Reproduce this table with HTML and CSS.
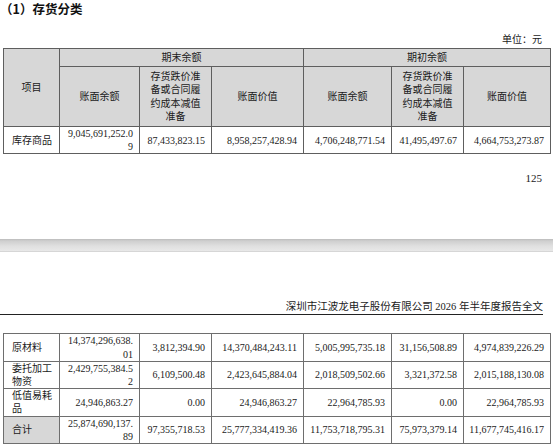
FILE: index.html
```html
<!DOCTYPE html>
<html lang="zh-CN">
<head>
<meta charset="utf-8">
<title>存货分类</title>
<link rel="stylesheet" href="styles.css">
</head>
<body>
<div class="doc">
  <section class="page page-first">
    <h2 class="section-title">（1）存货分类</h2>
    <div class="unit">单位：元</div>
    <table class="inv">
      <colgroup>
        <col class="c1"><col class="c2"><col class="c3"><col class="c4"><col class="c5"><col class="c6"><col class="c7">
      </colgroup>
      <thead>
        <tr class="hr1">
          <th rowspan="2">项目</th>
          <th colspan="3">期末余额</th>
          <th colspan="3">期初余额</th>
        </tr>
        <tr class="hr2">
          <th>账面余额</th>
          <th>存货跌价准备或合同履约成本减值准备</th>
          <th>账面价值</th>
          <th>账面余额</th>
          <th>存货跌价准备或合同履约成本减值准备</th>
          <th>账面价值</th>
        </tr>
      </thead>
      <tbody>
        <tr>
          <td class="name">库存商品</td>
          <td class="num">9,045,691,252.0<br>9</td>
          <td class="num">87,433,823.15</td>
          <td class="num">8,958,257,428.94</td>
          <td class="num">4,706,248,771.54</td>
          <td class="num">41,495,497.67</td>
          <td class="num">4,664,753,273.87</td>
        </tr>
      </tbody>
    </table>
    <div class="page-num">125</div>
  </section>
  <div class="page-gap"></div>
  <section class="page page-second">
    <div class="running-head">深圳市江波龙电子股份有限公司 2026 年半年度报告全文</div>
    <table class="inv inv-cont">
      <colgroup>
        <col class="c1"><col class="c2"><col class="c3"><col class="c4"><col class="c5"><col class="c6"><col class="c7">
      </colgroup>
      <tbody>
        <tr>
          <td class="name">原材料</td>
          <td class="num">14,374,296,638.<br>01</td>
          <td class="num">3,812,394.90</td>
          <td class="num">14,370,484,243.11</td>
          <td class="num">5,005,995,735.18</td>
          <td class="num">31,156,508.89</td>
          <td class="num">4,974,839,226.29</td>
        </tr>
        <tr>
          <td class="name">委托加工物资</td>
          <td class="num">2,429,755,384.5<br>2</td>
          <td class="num">6,109,500.48</td>
          <td class="num">2,423,645,884.04</td>
          <td class="num">2,018,509,502.66</td>
          <td class="num">3,321,372.58</td>
          <td class="num">2,015,188,130.08</td>
        </tr>
        <tr>
          <td class="name">低值易耗品</td>
          <td class="num">24,946,863.27</td>
          <td class="num">0.00</td>
          <td class="num">24,946,863.27</td>
          <td class="num">22,964,785.93</td>
          <td class="num">0.00</td>
          <td class="num">22,964,785.93</td>
        </tr>
        <tr class="total">
          <td class="name">合计</td>
          <td class="num">25,874,690,137.<br>89</td>
          <td class="num">97,355,718.53</td>
          <td class="num">25,777,334,419.36</td>
          <td class="num">11,753,718,795.31</td>
          <td class="num">75,973,379.14</td>
          <td class="num">11,677,745,416.17</td>
        </tr>
      </tbody>
    </table>
  </section>
</div>
</body>
</html>
```
FILE: styles.css
```css
html, body {
  margin: 0;
  padding: 0;
  background: #ffffff;
}

body {
  font-family: "Liberation Serif", "Noto Sans CJK SC", serif;
  color: #1a1a1a;
  font-size: 10px;
}

.doc {
  width: 553px;
}

.page {
  display: flex;
  flex-direction: column;
}

.section-title {
  margin: 0;
  font-family: "Noto Sans CJK SC", sans-serif;
  font-size: 12.5px;
  line-height: 18px;
  font-weight: 700;
  color: #111;
}

.unit {
  margin: 15px 11px 0 0;
  text-align: right;
  line-height: 14px;
  font-size: 10px;
}

.inv {
  margin: 1px 0 0 3px;
  width: 547px;
  table-layout: fixed;
  border-collapse: collapse;
}

.inv .c1 { width: 56px; }
.inv .c2 { width: 80px; }
.inv .c3 { width: 72px; }
.inv .c4 { width: 92px; }
.inv .c5 { width: 88px; }
.inv .c6 { width: 72px; }
.inv .c7 { width: 87px; }

.inv th,
.inv td {
  border: 1px solid #5e5e5e;
  font-size: 10px;
  line-height: 13.2px;
  font-weight: 400;
  vertical-align: middle;
}

.inv th {
  background: #d7d7d7;
  text-align: center;
  padding: 3px 8px;
}

.inv .hr1 th {
  padding: 2px 4px;
}

.inv td {
  padding: 0;
}

.inv td.name {
  text-align: left;
  padding: 0 4px 0 8px;
}

.inv td.num {
  text-align: right;
  padding: 0 6px 0 4px;
}

.inv .total td.name {
  background: #d7d7d7;
}

.inv-cont {
  margin-top: 18px;
}

.inv-cont td {
  border-color: #6e6e6e;
}

.page-num {
  margin: 17px 11px 0 0;
  text-align: right;
  font-size: 11px;
  line-height: 14px;
}

.page-gap {
  margin-top: 54px;
  height: 12px;
  background: linear-gradient(#bcbcbc 0, #cfcfcf 2px, #e0e0e0 60%, #e8e8e8 100%);
  border-bottom: 1px solid #d6d6d6;
}

.running-head {
  margin: 48px 10px 0 0;
  text-align: right;
  font-size: 10.5px;
  line-height: 14px;
  border-bottom: 1px solid #222;
}
```
